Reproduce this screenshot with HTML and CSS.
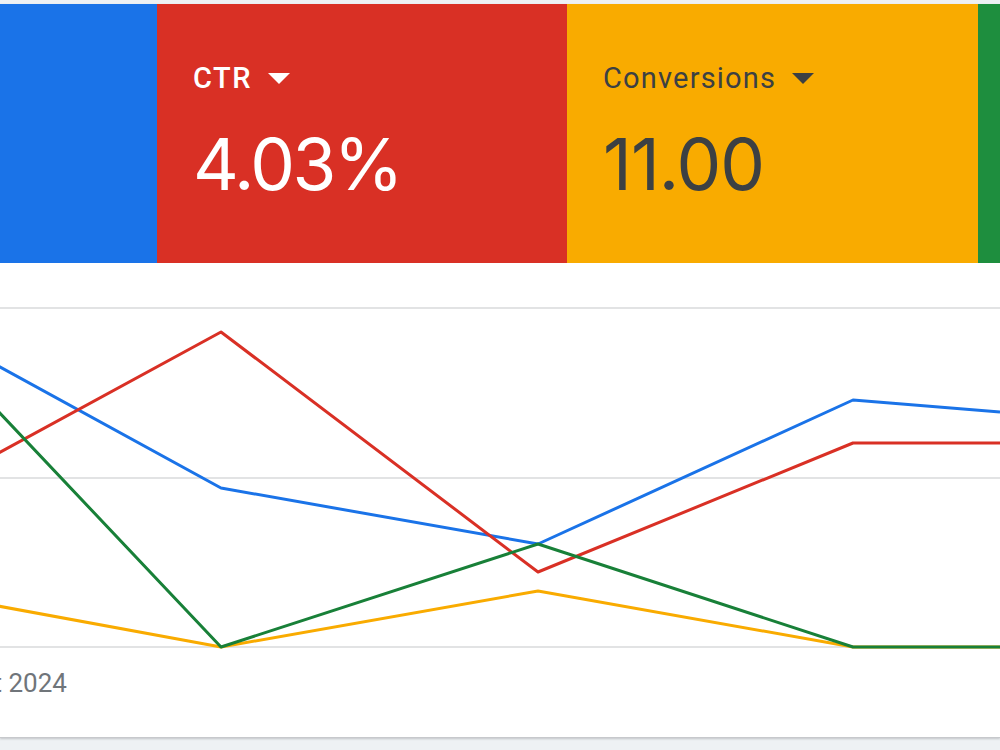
FILE: index.html
```html
<!DOCTYPE html>
<html lang="en">
<head>
    <meta charset="UTF-8">
    <meta name="viewport" content="width=device-width, initial-scale=1.0">
    <title>Campaign overview</title>
    <link rel="stylesheet" href="styles.css">
</head>
<body>
    <div class="page">
        <div class="card">
            <!-- Metric tiles -->
            <div class="tiles">
                <div class="tile tile-blue"></div>
                <div class="tile tile-red">
                    <div class="tile-label">CTR <span class="caret"></span></div>
                    <div class="tile-value">4.03%</div>
                </div>
                <div class="tile tile-yellow">
                    <div class="tile-label">Conversions <span class="caret"></span></div>
                    <div class="tile-value">11.00</div>
                </div>
                <div class="tile tile-green"></div>
            </div>

            <!-- Trend chart -->
            <svg class="chart" width="1000" height="390" viewBox="0 0 1000 390">
                <g class="grid">
                    <line x1="0" y1="45" x2="1000" y2="45"></line>
                    <line x1="0" y1="215" x2="1000" y2="215"></line>
                    <line x1="0" y1="384" x2="1000" y2="384"></line>
                </g>
                <polyline class="series s-yellow" points="-40,336 221,384 538,328 853,384 1000,384"></polyline>
                <polyline class="series s-blue" points="-40,82 221,225 538,281 853,137 1000,149"></polyline>
                <polyline class="series s-red" points="-40,211 221,69 538,309 853,180 1000,180"></polyline>
                <polyline class="series s-green" points="-40,108 221,384 538,281 853,384 1000,384"></polyline>
            </svg>

            <div class="axis">
                <span class="axis-label">Oct 2024</span>
            </div>
        </div>
    </div>
</body>
</html>
```

FILE: styles.css
```css
/* Reset */
html, body {
    margin: 0;
    padding: 0;
}

body {
    font-family: Roboto, "Liberation Sans", Arial, sans-serif;
    overflow: hidden;
}

.page {
    width: 1000px;
    height: 750px;
    background-color: #eef1f4;
    padding-top: 4px;
    box-sizing: border-box;
}

.card {
    background-color: white;
    height: 733px;
    border-bottom: 1px solid #c7c9cc;
    box-shadow: 0 1px 2px rgba(60, 64, 67, 0.25);
}

/* Metric tiles */
.tiles {
    display: flex;
    height: 259px;
}

.tile {
    flex-shrink: 0;
    box-sizing: border-box;
    padding: 54px 0 0 36px;
    display: flex;
    flex-direction: column;
}

.tile-blue {
    width: 157px;
    background-color: #1a73e8;
}

.tile-red {
    width: 410px;
    background-color: #d93025;
    color: white;
}

.tile-yellow {
    width: 411px;
    background-color: #f9ab00;
    color: #3c4043;
}

.tile-green {
    flex: 1 0 0;
    padding: 0;
    background-color: #1e8e3e;
}

.tile-label {
    font-size: 29px;
    line-height: 40px;
    letter-spacing: 1.2px;
    display: flex;
    align-items: center;
}

.tile-red .tile-label {
    font-weight: 500;
    letter-spacing: 1.5px;
}

.caret {
    width: 0;
    height: 0;
    margin-left: 16px;
    border-left: 11px solid transparent;
    border-right: 11px solid transparent;
    border-top: 11px solid currentColor;
}

.tile-value {
    font-family: Inter, Roboto, sans-serif;
    font-size: 71px;
    line-height: 90px;
    letter-spacing: -1px;
    margin-top: 21px;
}

.tile-red .tile-value {
    letter-spacing: -2.5px;
}

/* Chart */
.chart {
    display: block;
    overflow: visible;
}

.grid line {
    stroke: #e2e3e4;
    stroke-width: 2;
}

.series {
    fill: none;
    stroke-width: 3;
    stroke-linejoin: round;
}

.s-blue { stroke: #1a73e8; }
.s-red { stroke: #d93025; }
.s-yellow { stroke: #f9ab00; }
.s-green { stroke: #188038; }

.axis {
    padding-top: 15px;
    overflow: hidden;
}

.axis-label {
    display: inline-block;
    margin-left: -38px;
    font-size: 26px;
    color: #70757a;
}
```
